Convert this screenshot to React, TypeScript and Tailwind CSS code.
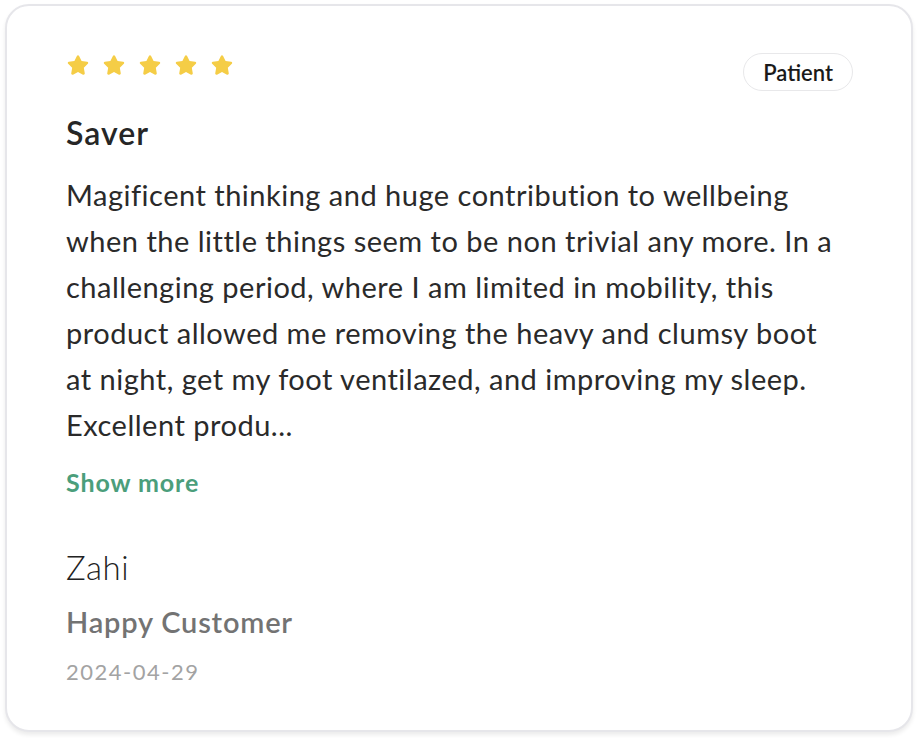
import { FaStar } from "react-icons/fa";

const body =
  "Magificent thinking and huge contribution to wellbeing when the little things seem to be non trivial any more. In a challenging period, where I am limited in mobility, this product allowed me removing the heavy and clumsy boot at night, get my foot ventilazed, and improving my sleep. Excellent produ...";

export default function App() {
  return (
    <div
      className="w-[918px] h-[738px] bg-white p-[4px_5px_6px_5px]"
      style={{ fontFamily: "Lato, 'Open Sans', sans-serif" }}
    >
      <div className="h-full rounded-[24px] border-2 border-[#e6e6ea] bg-white shadow-[0_3px_4px_rgba(0,0,0,0.08)] px-[59px] pt-[47px]">
        {/* STARS + BADGE */}
        <div className="flex items-start justify-between">
          <div className="flex gap-[14px] pt-[1px] pl-[1px]">
            {[1, 2, 3, 4, 5].map((s) => (
              <FaStar key={s} className="text-[#f5cd46] w-[22px] h-[22px]" />
            ))}
          </div>
          <span className="mr-[-1px] rounded-full border border-[#e8e8ea] px-[19px] h-[38px] flex items-center text-[22px] font-semibold text-[#1a1a1a]">
            Patient
          </span>
        </div>

        <h2 className="mt-[22px] text-[32px] font-semibold tracking-[1px] text-[#262626] leading-[40px]">
          Saver
        </h2>

        <p className="mt-[19px] max-w-[775px] text-[29px] leading-[46px] tracking-[0.5px] text-[#2a2a2a]">
          {body}
        </p>

        <button
          type="button"
          className="block mt-[16px] text-[25px] font-bold tracking-[0.9px] text-[#4b9e7b] leading-[36px]"
        >
          Show more
        </button>

        <p className="mt-[47px] text-[33px] font-light tracking-[0.5px] text-[#222] leading-[40px]">
          Zahi
        </p>
        <p className="mt-[17px] text-[29px] font-semibold tracking-[0.8px] text-[#737373] leading-[36px]">
          Happy Customer
        </p>
        <p className="mt-[16px] text-[22px] tracking-[1.5px] text-[#a3a3a3] leading-[32px]">
          2024-04-29
        </p>
      </div>
    </div>
  );
}
